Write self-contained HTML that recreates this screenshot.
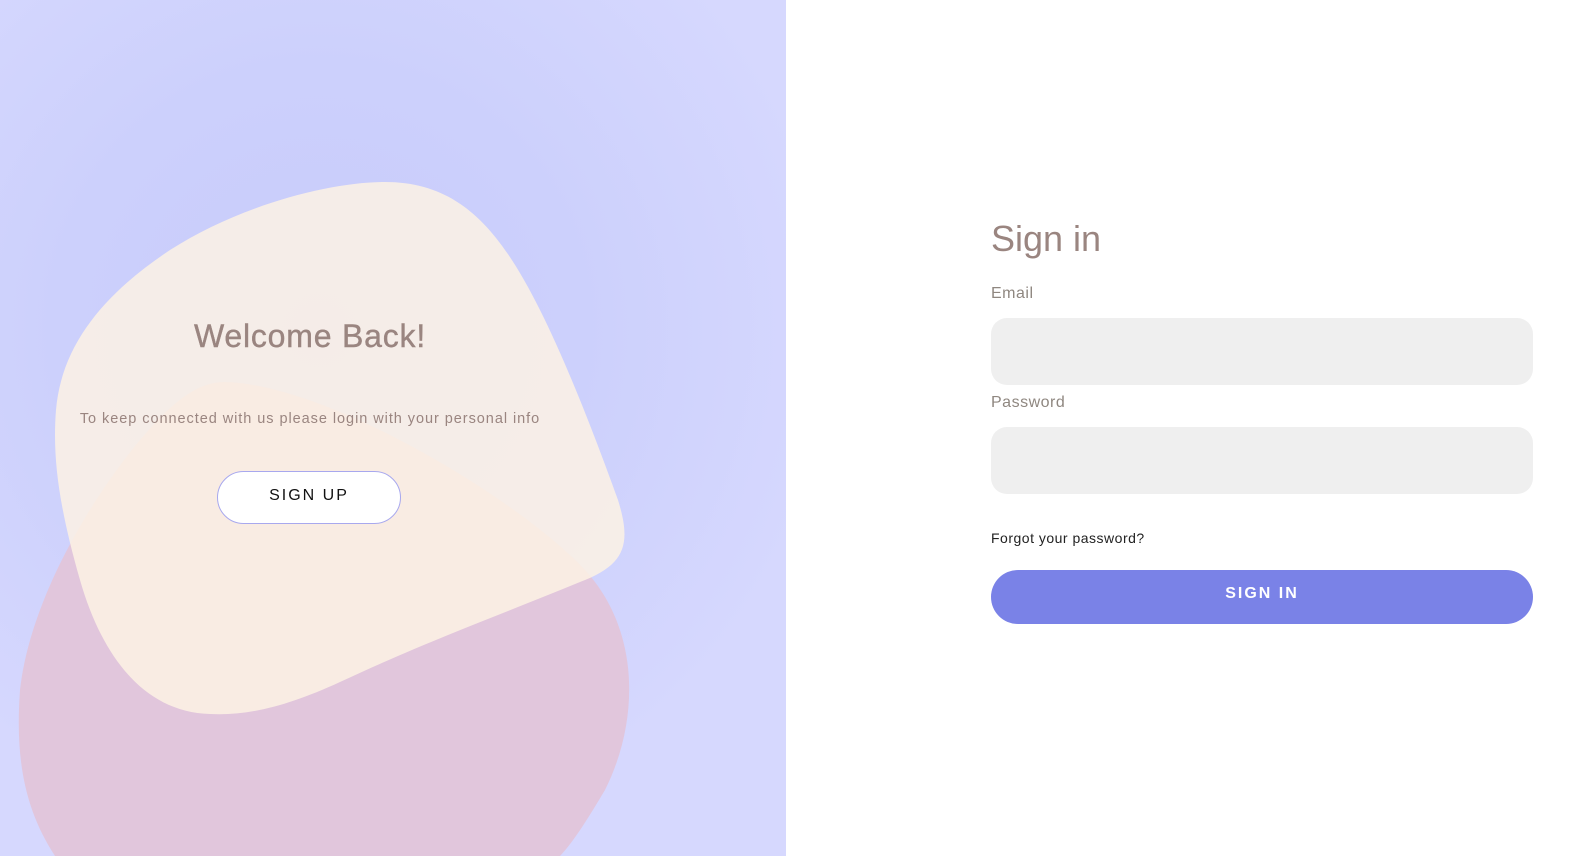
<!DOCTYPE html>
<html><head><meta charset="utf-8"><style>
html,body{margin:0;padding:0;width:1574px;height:856px;overflow:hidden;background:#fff;font-family:"Liberation Sans",sans-serif}
.left{position:absolute;left:0;top:0;width:786px;height:856px;background:radial-gradient(ellipse 520px 520px at 320px 330px,#c8cbfa 0%,#ccd0fc 50%,#d6d8fe 100%)}
svg{position:absolute;left:0;top:0}
h1{position:absolute;margin:0;left:0;width:620px;top:318px;text-align:center;font-size:32px;font-weight:normal;color:#9a8580;letter-spacing:0.8px;-webkit-text-stroke:0.4px #9a8580}
.p{position:absolute;left:0;width:620px;top:411px;text-align:center;font-size:14.5px;color:#9a8580;letter-spacing:0.95px}
.su{position:absolute;left:217px;top:471px;width:184px;height:53px;border:1px solid #a8a8ee;border-radius:27px;background:#fff;box-sizing:border-box;text-align:center;line-height:48px;font-size:16px;letter-spacing:2px;color:#111}
.si{position:absolute;left:991px;top:218px;font-size:36px;color:#9a8580;margin:0;font-weight:normal}
.lb{position:absolute;left:991px;font-size:16px;color:#8f8780;letter-spacing:0.5px}
.in{position:absolute;left:991px;width:542px;height:67px;background:#efefef;border-radius:16px}
.fg{position:absolute;left:991px;top:530px;font-size:14px;color:#222;letter-spacing:0.5px}
.bt{position:absolute;left:991px;top:570px;width:542px;height:54px;background:#7a82e7;border-radius:27px;color:#fff;text-align:center;line-height:48px;font-size:16px;font-weight:bold;letter-spacing:2px}
</style></head><body>
<div class="left">
<svg width="786" height="856" viewBox="0 0 786 856">
<path d="M225 382 C330 385 520 500 585 570 C640 630 640 720 605 790 C590 815 575 840 560 856 L55 856 C25 810 15 760 20 690 C30 600 90 500 140 440 C170 405 195 382 225 382 Z" fill="#e1c6dc"/>
<path d="M385 182 C460 182 500 230 540 310 C570 370 600 450 618 500 C632 545 625 565 580 582 C500 615 430 640 340 682 C290 705 250 716 210 714 C140 712 100 650 80 580 C60 510 52 460 56 410 C62 340 110 290 170 250 C240 205 330 182 385 182 Z" fill="#fdf2e4" fill-opacity="0.85"/>
</svg>
<h1>Welcome Back!</h1>
<div class="p">To keep connected with us please login with your personal info</div>
<div class="su">SIGN UP</div>
</div>
<h2 class="si">Sign in</h2>
<div class="lb" style="top:285px">Email</div>
<div class="in" style="top:318px"></div>
<div class="lb" style="top:394px">Password</div>
<div class="in" style="top:427px"></div>
<div class="fg">Forgot your password?</div>
<div class="bt">SIGN IN</div>
</body></html>
